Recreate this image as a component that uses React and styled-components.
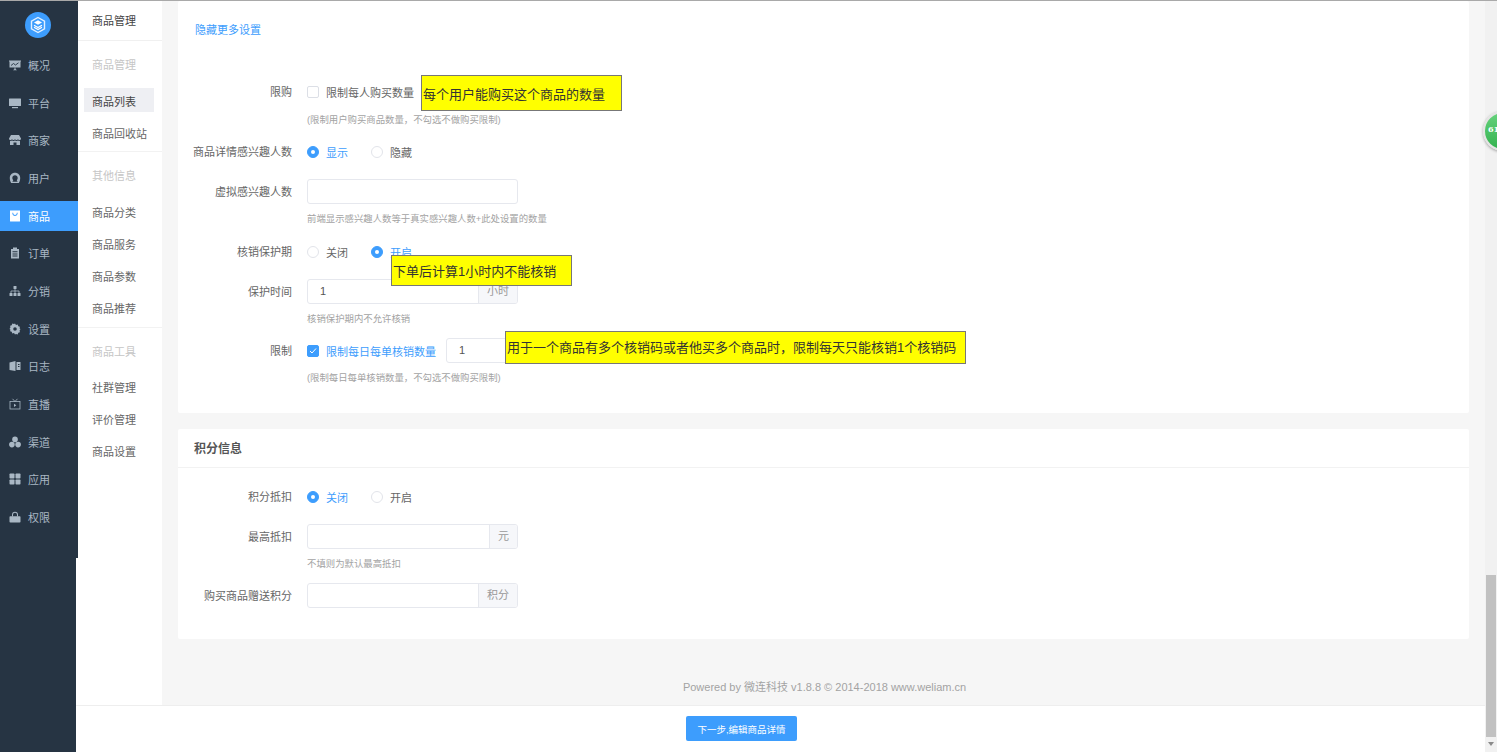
import React from 'react';
import styled, { createGlobalStyle } from 'styled-components';

const GlobalStyle = createGlobalStyle`
  html, body {
    margin: 0;
    height: 100%;
    overflow: hidden;
    background: #fff;
    font-family: "Liberation Sans", "Noto Sans CJK SC", sans-serif;
    font-size: 11px;
    color: #666;
  }
`;

const Page = styled.div`
  position: relative;
  display: flex;
  width: 1497px;
  height: 752px;
  overflow: hidden;
  border-top: 1px solid #a9a9a9;
  box-sizing: border-box;
`;

const Sidebar = styled.div`
  flex: 0 0 76px;
  width: 76px;
  min-width: 0;
  background: #263443;
`;

const Nav = styled.nav`
  position: relative;
  z-index: 1;
  width: 78px;
  height: 557px;
  background: #263443;
  display: flex;
  flex-direction: column;
  box-sizing: border-box;
`;

const LogoWrap = styled.div`
  height: 49px;
  display: flex;
  justify-content: center;
  padding: 11px 2px 0 0;
  box-sizing: border-box;
`;

const NavList = styled.div`
  display: flex;
  flex-direction: column;
  gap: 7.68px;
`;

const NavItem = styled.div`
  height: 30px;
  display: flex;
  align-items: center;
  gap: 7px;
  padding-left: 9px;
  font-size: 11px;
  color: ${(p) => (p.$active ? '#fff' : '#a9b7c4')};
  background: ${(p) => (p.$active ? '#3d9dfd' : 'transparent')};
  svg {
    width: 12px;
    height: 12px;
    flex: none;
  }
`;

const Body = styled.div`
  flex: 1;
  min-width: 0;
  display: flex;
  flex-direction: column;
`;

const Upper = styled.div`
  flex: 0 0 704px;
  display: flex;
  min-height: 0;
`;

const SubMenu = styled.aside`
  flex: 0 0 86px;
  box-sizing: border-box;
  padding-left: 2px;
  background: #fff;
`;

const SubHead = styled.div`
  height: 39px;
  line-height: 40px;
  padding-left: 14px;
  color: #444;
  border-bottom: 1px solid #f0f0f0;
`;

const SubGroup = styled.div`
  padding: 12px 8px ${(p) => p.$bottom}px 6px;
  border-bottom: ${(p) => (p.$last ? 'none' : '1px solid #f2f2f2')};
  display: flex;
  flex-direction: column;
  gap: 8px;
`;

const SubTitle = styled.div`
  height: 24px;
  line-height: 24px;
  padding-left: 8px;
  color: #c6c6c6;
  margin-bottom: ${(p) => p.$gap}px;
`;

const SubItem = styled.div`
  height: 24px;
  line-height: 29px;
  padding-left: 8px;
  color: ${(p) => (p.$active ? '#444' : '#666')};
  background: ${(p) => (p.$active ? '#eeeff3' : 'transparent')};
`;

const Main = styled.main`
  flex: 1;
  min-width: 0;
  background: #f6f6f6;
  padding: 0 16px;
  display: flex;
  flex-direction: column;
`;

const Card = styled.section`
  background: #fff;
  border-radius: 2px;
  margin-bottom: 16px;
`;

const CardBody = styled.div`
  padding: ${(p) => p.$padding};
`;

const CardHead = styled.div`
  height: 38px;
  line-height: 40px;
  padding-left: 16px;
  font-size: 12px;
  font-weight: 700;
  color: #555;
  border-bottom: 1px solid #f2f2f2;
`;

const MoreLink = styled.a`
  display: block;
  height: 16px;
  line-height: 18px;
  margin: 0 0 42px 17px;
  color: #3d9dfd;
`;

const Field = styled.div`
  display: grid;
  grid-template-columns: 114px 1fr;
  column-gap: 15px;
  margin-bottom: ${(p) => p.$gap ?? 14}px;
`;

const Label = styled.label`
  height: 25px;
  line-height: 26px;
  text-align: right;
  color: #666;
  white-space: nowrap;
`;

const Control = styled.div`
  display: flex;
  align-items: center;
  height: ${(p) => (p.$tall ? 26 : 25)}px;
`;

const Help = styled.div`
  grid-column: 2;
  height: 14px;
  line-height: 16px;
  margin: 7px 0 -1px;
  font-size: 9.4px;
  color: #a3a3a3;
  white-space: nowrap;
`;

const Check = styled.span`
  width: 12px;
  height: 12px;
  box-sizing: border-box;
  border-radius: 2px;
  flex: none;
  border: 1px solid ${(p) => (p.$on ? '#3d9dfd' : '#dcdfe6')};
  background: ${(p) => (p.$on ? '#3d9dfd' : '#fff')};
  display: flex;
  align-items: center;
  justify-content: center;
`;

const Option = styled.span`
  margin: 0 23px 0 7px;
  color: ${(p) => (p.$on ? '#3d9dfd' : '#666')};
  white-space: nowrap;
`;

const CheckText = styled(Option)`
  margin-right: 10px;
`;

const Radio = styled.span`
  width: 12px;
  height: 12px;
  box-sizing: border-box;
  border-radius: 50%;
  flex: none;
  border: 1px solid ${(p) => (p.$on ? '#3d9dfd' : '#e2e4ea')};
  background: ${(p) => (p.$on ? '#3d9dfd' : '#fff')};
  display: flex;
  align-items: center;
  justify-content: center;
  &::after {
    content: '';
    display: ${(p) => (p.$on ? 'block' : 'none')};
    width: 4px;
    height: 4px;
    border-radius: 50%;
    background: #fff;
  }
`;

const InputGroup = styled.div`
  width: ${(p) => p.$width || 211}px;
  height: 25px;
  box-sizing: border-box;
  display: flex;
  border: 1px solid #e6e8ee;
  border-radius: 3px;
  overflow: hidden;
  background: #fff;
`;

const InputText = styled.div`
  flex: 1;
  line-height: 23px;
  padding-left: 12px;
  color: #555;
`;

const Addon = styled.div`
  flex: none;
  padding: 0 8px;
  line-height: 23px;
  background: #f6f7fa;
  border-left: 1px solid #e6e8ee;
  color: #999;
`;

const Footer = styled.footer`
  margin-top: 24px;
  padding-left: 2px;
  text-align: center;
  line-height: 16px;
  color: #a3a3a3;
  font-size: 11px;
`;

const BottomBar = styled.div`
  flex: 1;
  background: #fff;
  border-top: 1px solid #eee;
  display: flex;
  justify-content: center;
  padding: 10px 78px 0 0;
`;

const NextButton = styled.button`
  width: 111px;
  height: 25px;
  border: none;
  border-radius: 2px;
  background: #3d9dfd;
  color: #fff;
  font: inherit;
  font-size: 9.5px;
  padding: 0;
`;

const Scrollbar = styled.div`
  flex: 0 0 12px;
  position: relative;
  z-index: 1;
  background: #f1f1f1;
  display: flex;
  flex-direction: column;
  align-items: center;
`;

const ScrollSpace = styled.div`
  flex: 0 0 574px;
`;

const ScrollThumb = styled.div`
  flex: 0 0 162px;
  width: 10px;
  background: #c1c1c1;
`;

const ScrollArrow = styled.div`
  margin-top: 5px;
  width: 0;
  height: 0;
  border-left: 3px solid transparent;
  border-right: 3px solid transparent;
  border-top: 4px solid #8a8a8a;
`;

const Note = styled.div`
  position: absolute;
  z-index: 2;
  left: ${(p) => p.$x}px;
  top: ${(p) => p.$y}px;
  width: ${(p) => p.$w}px;
  height: ${(p) => p.$h}px;
  box-sizing: border-box;
  border: 1px solid #777;
  background: #ff0;
  color: #333;
  font-size: 13px;
  padding: 0 0 ${(p) => p.$lift}px 1px;
  display: flex;
  align-items: center;
  white-space: nowrap;
`;

const Bubble = styled.div`
  position: absolute;
  z-index: 3;
  left: 1483px;
  top: 110px;
  width: 40px;
  height: 40px;
  box-sizing: border-box;
  border-radius: 50%;
  border: 2px solid #e4e4e4;
  box-shadow: 0 1px 3px rgba(0, 0, 0, 0.35);
  background: linear-gradient(#66d27c, #33b24f);
  color: #fff;
  font-family: "DejaVu Serif", serif;
  font-size: 8px;
  font-weight: 700;
  line-height: 32px;
  padding-left: 3px;
`;

const Logo = () => (
  <svg width="26" height="26" viewBox="0 0 26 26">
    <circle cx="13" cy="13" r="13" fill="#3d9dfd" />
    <path d="M13 5.500l6.500 3.700v7.600L13 20.500l-6.500-3.700V9.200z" fill="none" stroke="#fff" strokeWidth="1.400" opacity="0.85" />
    <path d="M13 8.300l4 2.200-4 2.300-4-2.300z" fill="#fff" />
    <path d="M9 13.200l4 2.300 4-2.300M9 15.200l4 2.300 4-2.300" fill="none" stroke="#fff" strokeWidth="1.200" />
  </svg>
);

const icons = {
  board: (
    <svg viewBox="0 0 12 12" fill="currentColor">
      <path d="M0 1.500h12v1h-.5v6h-11v-6H0z" />
      <path d="M2 6.500l2.500-2 2 1.500L9.500 3.800" fill="none" stroke="#263443" strokeWidth="0.9" />
      <path d="M5.500 8.500h1V10l1.500 1.200h-4L5.500 10z" />
    </svg>
  ),
  monitor: (
    <svg viewBox="0 0 12 12" fill="currentColor">
      <rect x="0" y="1.500" width="12" height="7.500" rx="0.500" />
      <rect x="3" y="10" width="6" height="1.200" />
    </svg>
  ),
  store: (
    <svg viewBox="0 0 12 12" fill="currentColor">
      <path d="M2 1h8l2 3.500c0 1-.8 1.500-1.500 1.500S9 5.500 9 5c0 .5-.8 1-1.500 1S6 5.500 6 5c0 .5-.8 1-1.500 1S3 5.500 3 5c0 .5-.8 1-1.500 1S0 5.500 0 4.500z" />
      <path d="M1 6.800c1 .3 1.500 0 2-.3.800.6 2 .6 3 0 1 .6 2.200.6 3 0 .5.3 1 .6 2 .3V11H7.500V8.500h-3V11H1z" />
    </svg>
  ),
  user: (
    <svg viewBox="0 0 12 12" fill="currentColor">
      <path fillRule="evenodd" d="M6 .8c3 0 5.200 2.200 5.200 5.200 0 2-.6 3.700-1.400 5H2.200C1.400 9.700.8 8 .8 6 .8 3 3 .8 6 .8zM6 3.300c-1.500 0-2.700 1.100-2.700 2.600 0 .9.300 1.700 1 2.300L3.300 9.800h5.400L7.700 8.200c.7-.6 1-1.400 1-2.300C8.700 4.400 7.500 3.300 6 3.300z" />
    </svg>
  ),
  bag: (
    <svg viewBox="0 0 12 12" fill="#fff">
      <path fillRule="evenodd" d="M1 .5h10V11a.5.5 0 0 1-.5.5h-9A.5.5 0 0 1 1 11zM3.300 2.800c0 4.400 5.400 4.400 5.400 0H7.800c0 3-3.600 3-3.600 0z" />
    </svg>
  ),
  clipboard: (
    <svg viewBox="0 0 12 12" fill="currentColor">
      <path fillRule="evenodd" d="M4 .5h4V2h2v9.500H2V2h2zM3.500 4.200v1h5v-1zm0 2.200v1h5v-1zm0 2.200v1h5v-1z" />
    </svg>
  ),
  tree: (
    <svg viewBox="0 0 12 12" fill="currentColor">
      <rect x="4.500" y="1" width="3" height="3" rx="0.500" />
      <rect x="0.500" y="8" width="3" height="3" rx="0.500" />
      <rect x="4.500" y="8" width="3" height="3" rx="0.500" />
      <rect x="8.500" y="8" width="3" height="3" rx="0.500" />
      <path d="M2 8V6h8v2M6 4v4" fill="none" stroke="currentColor" strokeWidth="0.800" />
    </svg>
  ),
  gear: (
    <svg viewBox="0 0 12 12" fill="currentColor">
      <path fillRule="evenodd" d="M6 .5l1 1.400 1.700-.3.6 1.600 1.600.6-.3 1.700L11.500 6l-.9 1.500.3 1.700-1.600.6-.6 1.600-1.700-.3L6 11.500l-1-1.400-1.700.3-.6-1.600-1.600-.6.3-1.700L.5 6l.9-1.500-.3-1.700 1.600-.6.6-1.600 1.700.3zM6 4.200a1.800 1.800 0 1 0 0 3.600 1.800 1.800 0 0 0 0-3.600z" />
    </svg>
  ),
  book: (
    <svg viewBox="0 0 12 12" fill="currentColor">
      <path d="M.5 2.500L6.500 1v10L.5 10z" />
      <path fillRule="evenodd" d="M7.500 2h4v8h-4zM9 4v1h1.500V4zm0 2v1h1.500V6z" />
    </svg>
  ),
  tv: (
    <svg viewBox="0 0 12 12" fill="none" stroke="currentColor" strokeWidth="0.800">
      <rect x="1" y="3.500" width="10" height="7.500" />
      <path d="M3.500.8L6 3.500 8.500.8" />
      <path d="M5 5.700l2.300 1.600L5 9z" fill="currentColor" stroke="none" />
    </svg>
  ),
  circles: (
    <svg viewBox="0 0 12 12" fill="currentColor">
      <circle cx="6" cy="3.400" r="2.800" />
      <circle cx="2.900" cy="8.600" r="2.800" />
      <circle cx="9.100" cy="8.600" r="2.800" />
    </svg>
  ),
  grid: (
    <svg viewBox="0 0 12 12" fill="currentColor">
      <rect x="0.500" y="0.500" width="5" height="5" rx="0.800" />
      <rect x="6.500" y="0.500" width="5" height="5" rx="0.800" />
      <rect x="0.500" y="6.500" width="5" height="5" rx="0.800" />
      <rect x="6.500" y="6.500" width="5" height="5" rx="0.800" />
    </svg>
  ),
  lock: (
    <svg viewBox="0 0 12 12" fill="currentColor">
      <path d="M3 5.500V3.800a3 3 0 0 1 6 0v1.700H8V3.800a2 2 0 0 0-4 0v1.700z" />
      <rect x="0.500" y="5.300" width="11" height="6.200" rx="0.800" />
    </svg>
  ),
};

const navItems = [
  ['board', '概况'],
  ['monitor', '平台'],
  ['store', '商家'],
  ['user', '用户'],
  ['bag', '商品', true],
  ['clipboard', '订单'],
  ['tree', '分销'],
  ['gear', '设置'],
  ['book', '日志'],
  ['tv', '直播'],
  ['circles', '渠道'],
  ['grid', '应用'],
  ['lock', '权限'],
];

const subGroups = [
  { title: '商品管理', items: ['商品列表', '商品回收站'], bottom: 7, gap: 3 },
  { title: '其他信息', items: ['商品分类', '商品服务', '商品参数', '商品推荐'], bottom: 8, gap: 3 },
  { title: '商品工具', items: ['社群管理', '评价管理', '商品设置'], bottom: 5, gap: 2, last: true },
];

const notes = [
  { x: 421, y: 74, w: 201, h: 36, lift: 0, text: '每个用户能购买这个商品的数量' },
  { x: 391, y: 254, w: 181, h: 31, lift: 1, text: '下单后计算1小时内不能核销' },
  { x: 505, y: 330, w: 461, h: 33, lift: 2, text: '用于一个商品有多个核销码或者他买多个商品时，限制每天只能核销1个核销码' },
];

const RadioPair = ({ options, selected }) =>
  options.map((opt, i) => (
    <React.Fragment key={opt}>
      <Radio $on={i === selected} />
      <Option $on={i === selected}>{opt}</Option>
    </React.Fragment>
  ));

export default function App() {
  return (
    <Page>
      <GlobalStyle />
      <Sidebar>
        <Nav>
          <LogoWrap>
            <Logo />
          </LogoWrap>
          <NavList>
            {navItems.map(([icon, name, active]) => (
              <NavItem key={name} $active={active}>
                {icons[icon]}
                {name}
              </NavItem>
            ))}
          </NavList>
        </Nav>
      </Sidebar>

      <Body>
        <Upper>
          <SubMenu>
            <SubHead>商品管理</SubHead>
            {subGroups.map((g) => (
              <SubGroup key={g.title} $last={g.last} $bottom={g.bottom}>
                <SubTitle $gap={g.gap}>{g.title}</SubTitle>
                {g.items.map((item) => (
                  <SubItem key={item} $active={item === '商品列表'}>
                    {item}
                  </SubItem>
                ))}
              </SubGroup>
            ))}
          </SubMenu>

          <Main>
            <Card>
              <CardBody $padding="20px 0 30px">
                <MoreLink>隐藏更多设置</MoreLink>
                <Field>
                  <Label>限购</Label>
                  <Control $tall>
                    <Check />
                    <Option>限制每人购买数量</Option>
                  </Control>
                  <Help>(限制用户购买商品数量，不勾选不做购买限制)</Help>
                </Field>
                <Field>
                  <Label>商品详情感兴趣人数</Label>
                  <Control $tall>
                    <RadioPair options={['显示', '隐藏']} selected={0} />
                  </Control>
                </Field>
                <Field $gap={15}>
                  <Label>虚拟感兴趣人数</Label>
                  <Control>
                    <InputGroup />
                  </Control>
                  <Help>前端显示感兴趣人数等于真实感兴趣人数+此处设置的数量</Help>
                </Field>
                <Field>
                  <Label>核销保护期</Label>
                  <Control $tall>
                    <RadioPair options={['关闭', '开启']} selected={1} />
                  </Control>
                </Field>
                <Field>
                  <Label>保护时间</Label>
                  <Control>
                    <InputGroup>
                      <InputText>1</InputText>
                      <Addon>小时</Addon>
                    </InputGroup>
                  </Control>
                  <Help>核销保护期内不允许核销</Help>
                </Field>
                <Field $gap={0}>
                  <Label>限制</Label>
                  <Control>
                    <Check $on>
                      <svg width="8" height="8" viewBox="0 0 8 8">
                        <path d="M1 4l2 2 4-4.500" fill="none" stroke="#fff" strokeWidth="1" />
                      </svg>
                    </Check>
                    <CheckText $on>限制每日每单核销数量</CheckText>
                    <InputGroup $width={72}>
                      <InputText>1</InputText>
                    </InputGroup>
                  </Control>
                  <Help>(限制每日每单核销数量，不勾选不做购买限制)</Help>
                </Field>
              </CardBody>
            </Card>

            <Card>
              <CardHead>积分信息</CardHead>
              <CardBody $padding="16px 0 31px">
                <Field>
                  <Label>积分抵扣</Label>
                  <Control $tall>
                    <RadioPair options={['关闭', '开启']} selected={0} />
                  </Control>
                </Field>
                <Field>
                  <Label>最高抵扣</Label>
                  <Control>
                    <InputGroup>
                      <InputText />
                      <Addon>元</Addon>
                    </InputGroup>
                  </Control>
                  <Help>不填则为默认最高抵扣</Help>
                </Field>
                <Field $gap={0}>
                  <Label>购买商品赠送积分</Label>
                  <Control>
                    <InputGroup>
                      <InputText />
                      <Addon>积分</Addon>
                    </InputGroup>
                  </Control>
                </Field>
              </CardBody>
            </Card>

            <Footer>Powered by 微连科技 v1.8.8 © 2014-2018 www.weliam.cn</Footer>
          </Main>
        </Upper>

        <BottomBar>
          <NextButton>下一步,编辑商品详情</NextButton>
        </BottomBar>
      </Body>

      <Scrollbar>
        <ScrollSpace />
        <ScrollThumb />
        <ScrollArrow />
      </Scrollbar>

      {notes.map((n) => (
        <Note key={n.text} $x={n.x} $y={n.y} $w={n.w} $h={n.h} $lift={n.lift}>
          {n.text}
        </Note>
      ))}
      <Bubble>61</Bubble>
    </Page>
  );
}
